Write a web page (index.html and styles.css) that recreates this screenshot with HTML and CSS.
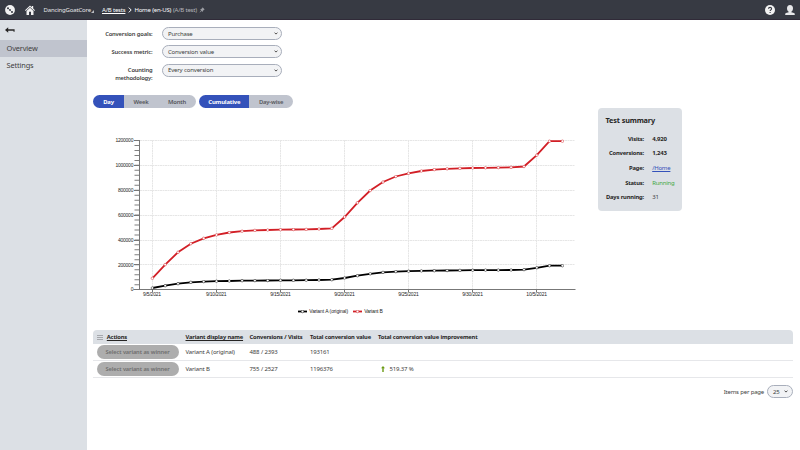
FILE: index.html
```html
<!DOCTYPE html>
<html lang="en">
<head>
    <meta charset="UTF-8">
    <meta name="viewport" content="width=device-width, initial-scale=1.0">
    <title>Home (en-US) - A/B test</title>
    <link rel="stylesheet" href="styles.css">
</head>
<body>

<header class="topbar">
    <svg class="logo" viewBox="0 0 10 10">
        <circle cx="5" cy="5" r="4.9" fill="#f2f2f2"/>
        <path d="M2.9 3.1L7 7.2" stroke="#9a9ca2" stroke-width=".7"/>
        <circle cx="3" cy="3.2" r="1" fill="#373a43"/>
        <circle cx="5" cy="5" r=".9" fill="#373a43"/>
        <circle cx="7" cy="6.9" r="1" fill="#373a43"/>
    </svg>
    <svg class="home" viewBox="0 0 10 10">
        <path d="M0 5.2L5 .5l1.8 1.7V.9h1.4v2.6L10 5.2l-.7.7L5 1.9.7 5.9z" fill="#f2f2f2"/>
        <path d="M1.5 6L5 2.8 8.5 6v3.9H6V6.8H4v3.1H1.5z" fill="#f2f2f2"/>
    </svg>
    <span class="site">DancingGoatCore</span>
    <svg class="corner" viewBox="0 0 3 3"><path d="M3 0v3H0z" fill="#b9bbc0"/></svg>
    <nav class="breadcrumbs">
        <a href="#">A/B tests</a>
        <svg viewBox="0 0 4 6"><path d="M.8.6L3.2 3 .8 5.4" fill="none" stroke="#fff" stroke-width="1"/></svg>
        <span>Home (en-US)</span>
        <span class="muted">(A/B test)</span>
    </nav>
    <svg class="pin" viewBox="0 0 6 6">
        <path d="M3.6.3l2.1 2.1-.6.3-1.1 1.1-.2 1.1-2.7-2.7 1.1-.2L3.3.9zM2.1 3.2l.7.7L.3 5.8z" fill="#9b9da3"/>
    </svg>
    <svg class="help" viewBox="0 0 10 10">
        <circle cx="5" cy="5" r="5" fill="#f2f2f2"/>
        <path d="M3.5 3.8C3.5 1.9 6.6 1.9 6.6 3.8 6.6 4.9 5.1 4.9 5.1 6.1M5.1 6.9v1.1" fill="none" stroke="#373a43" stroke-width="1.1"/>
    </svg>
    <svg class="user" viewBox="0 0 10 10">
        <path d="M5 0C7 0 8 1.3 8 3.2 8 5 7.2 6.3 6.3 6.8v.5L9 8c.6.2.8.8.8 2H.2C.2 8.8.4 8.2 1 8l2.7-.7v-.5C2.8 6.3 2 5 2 3.2 2 1.3 3 0 5 0z" fill="#e6e7e9"/>
    </svg>
</header>

<div class="layout">
    <aside class="sidebar">
        <div class="back">
            <svg viewBox="0 0 10 6"><path d="M3.2.3v1.9h6.4v2.6H8.5V3.7H3.2v2L0 3z" fill="#262524"/></svg>
        </div>
        <a class="item active" href="#">Overview</a>
        <a class="item" href="#">Settings</a>
    </aside>

    <main class="content">
        <div class="overview">
            <div class="report">
                <div class="filters">
                    <label>Conversion goals:</label>
                    <div class="select">Purchase <svg viewBox="0 0 4 3"><path d="M.5.6L2 2.1 3.5.6"/></svg></div>
                    <label>Success metric:</label>
                    <div class="select">Conversion value <svg viewBox="0 0 4 3"><path d="M.5.6L2 2.1 3.5.6"/></svg></div>
                    <label>Counting methodology:</label>
                    <div class="select">Every conversion <svg viewBox="0 0 4 3"><path d="M.5.6L2 2.1 3.5.6"/></svg></div>
                </div>

                <div class="toggles">
                    <div class="group period">
                        <button class="on">Day</button><button>Week</button><button>Month</button>
                    </div>
                    <div class="group mode">
                        <button class="on">Cumulative</button><button>Day-wise</button>
                    </div>
                </div>

                <svg class="chart" viewBox="93 125 500 195">
                    <defs>
                        <marker id="dotA" markerUnits="userSpaceOnUse" markerWidth="4" markerHeight="4" refX="2" refY="2">
                            <circle cx="2" cy="2" r="1.3" fill="#fff" stroke="#000" stroke-width=".45"/>
                        </marker>
                        <marker id="dotB" markerUnits="userSpaceOnUse" markerWidth="4" markerHeight="4" refX="2" refY="2">
                            <circle cx="2" cy="2" r="1.3" fill="#fff" stroke="#d21f26" stroke-width=".45"/>
                        </marker>
                    </defs>

                    <!-- grid -->
                    <path class="grid" d="M140 140.5H575M140 165.5H575M140 190.5H575M140 215.5H575M140 240.5H575M140 264.5H575M152.5 140V289M216.5 140V289M280.5 140V289M344.5 140V289M408.5 140V289M472.5 140V289M536.5 140V289"/>

                    <!-- axes -->
                    <path class="minor" d="M137 140V290"/>
                    <path class="axis" d="M139.5 140V290M133.5 289.5H575.5M134 140.5h5M134 165.5h5M134 190.5h5M134 215.5h5M134 240.5h5M134 264.5h5M152.5 289v3M216.5 289v3M280.5 289v3M344.5 289v3M408.5 289v3M472.5 289v3M536.5 289v3"/>
                    <g class="ylabels">
                        <text x="133.2" y="142.2">1200000</text>
                        <text x="133.2" y="167.2">1000000</text>
                        <text x="133.2" y="192.2">800000</text>
                        <text x="133.2" y="217.2">600000</text>
                        <text x="133.2" y="242.2">400000</text>
                        <text x="133.2" y="266.7">200000</text>
                        <text x="133.2" y="291.2">0</text>
                    </g>
                    <g class="xlabels">
                        <text x="152" y="296.2">9/5/2021</text>
                        <text x="216.2" y="296.2">9/10/2021</text>
                        <text x="280.4" y="296.2">9/15/2021</text>
                        <text x="344.4" y="296.2">9/20/2021</text>
                        <text x="408.4" y="296.2">9/25/2021</text>
                        <text x="472.5" y="296.2">9/30/2021</text>
                        <text x="536.6" y="296.2">10/5/2021</text>
                    </g>

                    <!-- series -->
                    <polyline class="line a" points="152.4,288 165.2,285.7 178,283.7 190.8,282.3 203.7,281.6 216.5,281.2 229.3,281 242.1,280.7 254.9,280.6 267.7,280.5 280.5,280.3 293.4,280.3 306.2,280.2 319,280 331.8,279.7 344.6,278 357.4,275.7 370.2,273.8 383,272.4 395.8,271.6 408.6,271.2 421.4,270.9 434.3,270.7 447.1,270.5 459.9,270.4 472.7,270.2 485.5,270.1 498.3,270.1 511.1,270 524,269.6 536.8,267.8 549.5,265.7 562.4,265.7"/>
                    <polyline class="line b" points="152.4,278.3 165.2,264.6 178,252.3 190.8,243.7 203.7,238.3 216.5,234.9 229.3,232.5 242.1,231.2 254.9,230.4 267.7,230 280.5,229.7 293.4,229.5 306.2,229.4 319,229 331.8,228.4 344.6,217 357.4,202.8 370.2,190.5 383,182 395.8,176.5 408.6,173.3 421.4,171 434.3,169.6 447.1,168.8 459.9,168.4 472.7,168 485.5,167.8 498.3,167.6 511.1,167.3 524,166.5 536.8,155.2 549.5,141.2 562.4,141.2"/>

                    <!-- legend -->
                    <path class="line a" d="M298 311.5H302.5H307"/>
                    <text x="309.3" y="313.3" textLength="38.5">Variant A (original)</text>
                    <path class="line b" d="M353 311.5H357.5H362"/>
                    <text x="364.2" y="313.3" textLength="18.5">Variant B</text>
                </svg>
            </div>

            <section class="summary">
                <h2>Test summary</h2>
                <dl>
                    <dt>Visits:</dt><dd class="strong">4,920</dd>
                    <dt>Conversions:</dt><dd class="strong">1,243</dd>
                    <dt>Page:</dt><dd><a href="#">/Home</a></dd>
                    <dt>Status:</dt><dd class="running">Running</dd>
                    <dt>Days running:</dt><dd>31</dd>
                </dl>
            </section>
        </div>

        <table class="variants">
            <thead>
                <tr>
                    <th class="c-action"><svg class="menu" viewBox="0 0 6 5"><path d="M0 .5h6M0 2.5h6M0 4.5h6"/></svg><u>Actions</u></th>
                    <th class="c-name"><u>Variant display name</u></th>
                    <th class="c-visits">Conversions / Visits</th>
                    <th class="c-value">Total conversion value</th>
                    <th>Total conversion value improvement</th>
                </tr>
            </thead>
            <tbody>
                <tr>
                    <td><button class="winner" disabled>Select variant as winner</button></td>
                    <td>Variant A (original)</td>
                    <td>488 / 2393</td>
                    <td>193161</td>
                    <td></td>
                </tr>
                <tr>
                    <td><button class="winner" disabled>Select variant as winner</button></td>
                    <td>Variant B</td>
                    <td>755 / 2527</td>
                    <td>1196376</td>
                    <td><svg class="up" viewBox="0 0 4 6"><path d="M2 0l2 2.3H2.7V6H1.3V2.3H0z"/></svg>519.37 %</td>
                </tr>
            </tbody>
        </table>

        <div class="pager">
            <span>Items per page</span>
            <div class="select">25 <svg viewBox="0 0 4 3"><path d="M.5.6L2 2.1 3.5.6"/></svg></div>
        </div>
    </main>
</div>

</body>
</html>
```
FILE: styles.css
```css
* {
    box-sizing: border-box;
}

body {
    margin: 0;
    font-family: "Noto Sans", "Open Sans", sans-serif;
    font-size: 6px;
    letter-spacing: -0.17px;
    word-spacing: 0.2px;
    color: #403e3d;
    background: #fff;
}

svg {
    display: block;
    flex: none;
}

button {
    font-family: inherit;
    letter-spacing: inherit;
    word-spacing: inherit;
    border: none;
    padding: 0;
}

/* top bar */
.topbar {
    display: flex;
    align-items: center;
    height: 20px;
    padding: 0 5px;
    background: #373a43;
    border-bottom: 1px solid #302a38;
    color: #e4e5e7;
}

.logo {
    width: 10px;
    height: 10px;
    margin-right: 10px;
}

.home {
    width: 10px;
    height: 10px;
    margin-right: 8.5px;
}

.site {
    width: 46px;
    white-space: nowrap;
}

.corner {
    width: 3px;
    height: 3px;
    margin: 3px 8px 0 1.5px;
}

.breadcrumbs {
    display: flex;
    align-items: center;
    white-space: nowrap;
    color: #fff;
    letter-spacing: -0.2px;
}

.breadcrumbs a {
    color: #fff;
}

.breadcrumbs svg {
    width: 4px;
    height: 6px;
    margin: 0 2px 0 3px;
}

.breadcrumbs .muted {
    margin-left: 1.8px;
    color: #b4b6bb;
}

.pin {
    width: 6px;
    height: 6px;
    margin-left: 2.5px;
}

.help {
    width: 10px;
    height: 10px;
    margin-left: auto;
    margin-right: 10px;
}

.user {
    width: 10px;
    height: 10px;
}

/* layout */
.layout {
    display: flex;
    height: 430px;
}

.sidebar {
    width: 87px;
    background: #dce0e5;
}

.back {
    height: 20px;
    padding: 7px 5px;
}

.back svg {
    width: 10px;
    height: 6px;
}

.item {
    display: block;
    height: 17px;
    padding-left: 6.5px;
    font-size: 7.4px;
    letter-spacing: -0.14px;
    line-height: 17px;
    color: #403e3d;
    text-decoration: none;
}

.item.active {
    background: #c0c4ce;
}

.content {
    flex: 1;
    padding: 7px 7px 0 6px;
}

.overview {
    display: flex;
    align-items: flex-start;
    height: 303px;
}

.report {
    width: 500px;
}

/* filters */
.filters {
    display: grid;
    grid-template-columns: 59.5px 120.5px;
    column-gap: 9px;
    grid-template-rows: 18.3px 18.3px 24px;
    align-items: start;
}

.filters label {
    padding-top: 2.5px;
    line-height: 8px;
    text-align: right;
    font-weight: 600;
    font-size: 5.8px;
}

.select {
    display: flex;
    align-items: center;
    justify-content: space-between;
    height: 13px;
    padding: 0 3px 0 5.5px;
    border: 1px solid #a8aebb;
    border-radius: 7px;
    background: #f2f3f5;
    font-size: 6px;
}

.select svg {
    width: 4px;
    height: 3px;
}

.select path {
    fill: none;
    stroke: #403e3d;
    stroke-width: 0.9;
}

/* toggles */
.toggles {
    display: flex;
    gap: 3.3px;
    margin-top: 7.2px;
}

.group {
    display: flex;
    height: 13.5px;
    border-radius: 7px;
    overflow: hidden;
}

.group button {
    background: #c0c4ce;
    color: #55565b;
    font-size: 5.9px;
    font-weight: 600;
}

.group .on {
    background: #3452ba;
    color: #fff;
    font-weight: 700;
}

.period {
    width: 103px;
}

.period button {
    flex: 38 0 0;
}

.period .on {
    flex: 31 0 0;
}

.period button:nth-child(2) {
    flex: 34 0 0;
}

.mode {
    width: 93.6px;
}

.mode .on {
    width: 50px;
}

.mode button:last-child {
    flex: 1;
}

/* chart */
.chart {
    width: 500px;
    height: 195px;
    margin-top: 16.8px;
    font-family: "Liberation Sans", Arial, sans-serif;
    font-size: 5px;
    letter-spacing: -0.25px;
}

.chart text {
    fill: #262524;
}

.grid {
    fill: none;
    stroke: #e6e6e6;
    stroke-width: 1;
    stroke-dasharray: 2 0.5;
}

.axis {
    fill: none;
    stroke: #777;
    stroke-width: 1;
}

.minor {
    stroke: #808080;
    stroke-width: 5;
    stroke-dasharray: 1 3.97;
}

.ylabels {
    text-anchor: end;
}

.xlabels {
    text-anchor: middle;
    letter-spacing: -0.2px;
}

.line {
    fill: none;
    stroke-width: 1.8;
}

.line.a {
    stroke: #000;
    marker-mid: url(#dotA);
}

.line.b {
    stroke: #d21f26;
    marker-mid: url(#dotB);
}

polyline.line.a {
    marker-start: url(#dotA);
    marker-end: url(#dotA);
}

polyline.line.b {
    marker-start: url(#dotB);
    marker-end: url(#dotB);
}

/* summary */
.summary {
    width: 84.5px;
    height: 103px;
    margin: 81px 0 0 4.5px;
    padding: 6.5px 8px;
    border-radius: 4px;
    background: #dce0e5;
}

.summary h2 {
    margin: 0 0 7.3px;
    font-size: 7.3px;
    line-height: 10px;
    font-weight: 700;
    color: #262524;
    white-space: nowrap;
}

.summary dl {
    display: grid;
    grid-template-columns: 38.5px 1fr;
    column-gap: 8.2px;
    grid-auto-rows: 14.65px;
    line-height: 14.65px;
    margin: 0;
}

.summary dt {
    text-align: right;
    font-weight: 700;
    font-size: 5.8px;
    white-space: nowrap;
    color: #262524;
}

.summary dd {
    margin: 0;
    letter-spacing: -0.22px;
}

.summary .strong {
    font-weight: 700;
    color: #262524;
    letter-spacing: -0.15px;
}

.summary a {
    color: #3452ba;
}

.summary .running {
    color: #3fa83f;
}

/* variants table */
.variants {
    width: 100%;
    border-collapse: separate;
    border-spacing: 0;
    table-layout: fixed;
}

.variants th {
    height: 14px;
    padding: 0;
    background: #dce0e5;
    text-align: left;
    font-weight: 700;
    font-size: 5.75px;
    white-space: nowrap;
    color: #262524;
}

.variants th:first-child {
    border-radius: 4px 0 0 0;
    padding-left: 4px;
}

.variants th:last-child {
    border-radius: 0 4px 0 0;
}

.variants td {
    height: 17px;
    padding: 0;
    border-bottom: 1px solid #e6e7ea;
    white-space: nowrap;
}

.variants td:first-child {
    padding-left: 3.5px;
}

.c-action {
    width: 92.5px;
}

.c-name {
    width: 64px;
}

.c-visits {
    width: 60.5px;
}

.c-value {
    width: 68px;
}

.menu {
    display: inline-block;
    width: 6px;
    height: 5px;
    margin-right: 3.8px;
    vertical-align: -0.5px;
}

.menu path {
    stroke: #8c8e94;
    stroke-width: 0.7;
}

.winner {
    display: block;
    width: 82px;
    height: 13.5px;
    border-radius: 7px;
    background: #adadad;
    color: #6e6e6e;
    font-size: 5.7px;
    letter-spacing: -0.12px;
    font-weight: 600;
}

.up {
    display: inline-block;
    width: 4px;
    height: 6px;
    margin: 0 5px 0 2.5px;
    vertical-align: -0.5px;
}

.up path {
    fill: #6b9a14;
}

/* pager */
.pager {
    display: flex;
    align-items: center;
    justify-content: flex-end;
    gap: 3px;
    margin-top: 7px;
    letter-spacing: -0.22px;
}

.pager .select {
    width: 26px;
    padding: 0 4px 0 5px;
}
```
